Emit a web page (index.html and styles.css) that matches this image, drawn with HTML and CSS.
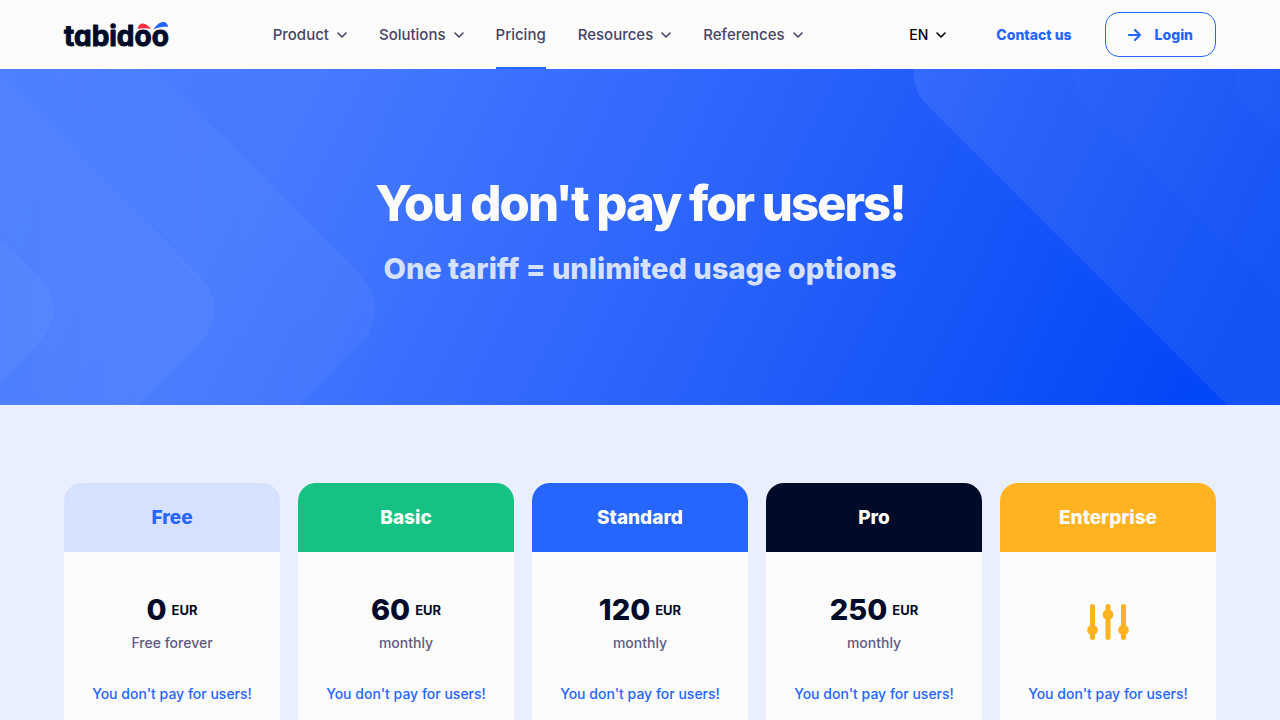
FILE: index.html
```html
<!DOCTYPE html>
<html lang="en">
  <head>
    <meta charset="utf-8">
    <meta name="viewport" content="width=device-width, initial-scale=1.0">
    <title>Pricing | Tabidoo</title>
    <link rel="stylesheet" href="styles.css">
  </head>
  <body>
    <header class="header">
      <a href="#" class="logo" aria-label="tabidoo">
        <svg width="106" height="28" viewBox="0 0 106 28">
          <text class="logo-text" x="0" y="25">tabidoo</text>
          <path fill="#ff3340" d="M73.500 8C74 4.500 76 2.500 78.500 2.500c3.500 0 6.500 3 8.500 5.500-5-1.300-9-1-13.500 0z"/>
          <path fill="#2666ff" d="M89.500 8.500C93 3 96 1 99.500 1c2.500 0 4.500 2 4.500 5-5-.8-9.500.3-14.500 2.500z"/>
        </svg>
      </a>
      <nav class="nav">
        <a href="#">Product <svg class="chevron" viewBox="0 0 10 6"><path d="M1 1l4 4 4-4"/></svg></a>
        <a href="#">Solutions <svg class="chevron" viewBox="0 0 10 6"><path d="M1 1l4 4 4-4"/></svg></a>
        <a href="#" class="active">Pricing</a>
        <a href="#">Resources <svg class="chevron" viewBox="0 0 10 6"><path d="M1 1l4 4 4-4"/></svg></a>
        <a href="#">References <svg class="chevron" viewBox="0 0 10 6"><path d="M1 1l4 4 4-4"/></svg></a>
      </nav>
      <div class="actions">
        <button type="button" class="lang">EN <svg class="chevron" viewBox="0 0 10 6"><path d="M1 1l4 4 4-4"/></svg></button>
        <a href="#" class="contact">Contact us</a>
        <a href="#" class="login">
          <svg class="arrow" viewBox="0 0 14 14"><path d="M1 7h11M7 2l5 5-5 5"/></svg>
          Login
        </a>
      </div>
    </header>

    <main>
      <section class="hero">
        <svg class="hero-shapes" viewBox="0 0 1280 336" preserveAspectRatio="none">
          <defs>
            <linearGradient id="fade-left" x1="1" y1="0" x2="0" y2="0">
              <stop offset="0" stop-color="#fff" stop-opacity=".04"/>
              <stop offset="1" stop-color="#fff" stop-opacity="0"/>
            </linearGradient>
            <linearGradient id="fade-right" gradientUnits="userSpaceOnUse" x1="913" y1="0" x2="1280" y2="200">
              <stop offset="0" stop-color="#fff" stop-opacity=".08"/>
              <stop offset="1" stop-color="#fff" stop-opacity=".07"/>
            </linearGradient>
          </defs>
          <path fill="url(#fade-left)" d="M154 0L361 207Q390 240 361 274L299 336H-140V0z"/>
          <path fill="url(#fade-left)" d="M-7 0L200 207Q229 240 200 274L138 336H-140V0z"/>
          <path fill="url(#fade-left)" d="M-140 28L39 207Q68 240 39 274L-23 336H-140z"/>
          <path fill="url(#fade-right)" d="M914 0Q912 20 925 34L1227 336H1280V0z"/>
          <path fill="#fff" fill-opacity=".015" d="M1074 0Q1072 20 1085 34L1280 229V0z"/>
          <path fill="#fff" fill-opacity=".015" d="M1235 0Q1233 20 1246 34L1280 68V0z"/>
        </svg>
        <div class="hero-content">
          <h1>You don't pay for users!</h1>
          <p>One tariff = unlimited usage options</p>
        </div>
      </section>

      <section class="plans">
        <article class="plan free">
          <h2>Free</h2>
          <div class="plan-body">
            <div class="price">
              <p class="amount"><strong>0</strong> <span>EUR</span></p>
              <p class="period">Free forever</p>
            </div>
            <p class="note">You don't pay for users!</p>
          </div>
        </article>
        <article class="plan basic">
          <h2>Basic</h2>
          <div class="plan-body">
            <div class="price">
              <p class="amount"><strong>60</strong> <span>EUR</span></p>
              <p class="period">monthly</p>
            </div>
            <p class="note">You don't pay for users!</p>
          </div>
        </article>
        <article class="plan standard">
          <h2>Standard</h2>
          <div class="plan-body">
            <div class="price">
              <p class="amount"><strong>120</strong> <span>EUR</span></p>
              <p class="period">monthly</p>
            </div>
            <p class="note">You don't pay for users!</p>
          </div>
        </article>
        <article class="plan pro">
          <h2>Pro</h2>
          <div class="plan-body">
            <div class="price">
              <p class="amount"><strong>250</strong> <span>EUR</span></p>
              <p class="period">monthly</p>
            </div>
            <p class="note">You don't pay for users!</p>
          </div>
        </article>
        <article class="plan enterprise">
          <h2>Enterprise</h2>
          <div class="plan-body">
            <div class="price">
              <svg class="sliders" viewBox="0 0 42 36">
                <path d="M5.500 2.500v31M21 2.500v31M36.500 2.500v31"/>
                <circle cx="5.500" cy="26" r="5.300"/>
                <circle cx="21" cy="10.500" r="5.300"/>
                <circle cx="36.500" cy="26" r="5.300"/>
              </svg>
            </div>
            <p class="note">You don't pay for users!</p>
          </div>
        </article>
      </section>
    </main>
  </body>
</html>
```

FILE: styles.css
```css
* {
  box-sizing: border-box;
}
body {
  margin: 0;
  font-family: Inter, sans-serif;
  font-size: 14px;
  font-weight: 500;
  background-color: #e9effe;
  color: #000b29;
}
h1, h2, p {
  margin: 0;
}
a {
  color: inherit;
  text-decoration: none;
}

/* header */
.header {
  display: flex;
  align-items: center;
  justify-content: space-between;
  height: 69px;
  padding: 0 5%;
  background-color: #fcfcfc;
}
.logo svg {
  display: block;
  overflow: visible;
}
.logo-text {
  font-size: 28px;
  font-weight: 700;
  font-feature-settings: "cv11";
  fill: #000b29;
  stroke: #000b29;
  stroke-width: 1;
  stroke-linejoin: round;
}
.nav {
  display: flex;
  align-self: stretch;
  gap: 32px;
  margin-right: 4px;
  color: #474566;
  font-size: 15px;
}
.nav a {
  display: flex;
  align-items: center;
  gap: 8px;
  border-top: 2px solid transparent;
  border-bottom: 2px solid transparent;
}
.nav .active {
  border-bottom-color: #2666ff;
}
.chevron {
  width: 10px;
  height: 6px;
  fill: none;
  stroke: currentColor;
  stroke-width: 1.6;
  stroke-linecap: round;
  stroke-linejoin: round;
}
.actions {
  display: flex;
  align-items: center;
}
.lang {
  display: flex;
  align-items: center;
  gap: 8px;
  margin-right: 50px;
  padding: 0;
  border: 0;
  background: none;
  color: #000;
  font: inherit;
}
.contact {
  margin-right: 33px;
  color: #2666ff;
  font-weight: 800;
}
.login {
  display: flex;
  align-items: center;
  gap: 13px;
  height: 45px;
  padding: 0 22px;
  border: 1px solid #2666ff;
  border-radius: 14px;
  color: #2666ff;
  font-weight: 800;
}
.arrow {
  width: 14px;
  height: 14px;
  fill: none;
  stroke: currentColor;
  stroke-width: 2.2;
  stroke-linecap: round;
  stroke-linejoin: round;
}

/* hero */
.hero {
  position: relative;
  padding: 105px 5% 116px;
  background: linear-gradient(116deg, #4c7fff 0%, #467aff 22%, #2e66fc 52%, #0346f6 94%);
  text-align: center;
}
.hero-shapes {
  position: absolute;
  inset: 0;
  width: 100%;
  height: 100%;
}
.hero-content {
  position: relative;
}
.hero h1 {
  color: #fcfcfc;
  font-size: 49px;
  font-weight: 800;
  line-height: 60px;
  letter-spacing: -2px;
}
.hero p {
  margin-top: 15px;
  color: #d6e0ff;
  font-size: 29px;
  font-weight: 800;
  line-height: 40px;
}

/* plans */
.plans {
  display: grid;
  grid-template-columns: repeat(5, 1fr);
  gap: 18px;
  padding: 78px 5%;
}
.plan {
  border-radius: 18px;
  overflow: hidden;
  background-color: #fcfcfc;
  text-align: center;
}
.plan h2 {
  padding: 21px 0 20px;
  color: #fcfcfc;
  font-size: 19px;
  font-weight: 800;
  line-height: 28px;
}
.free h2 {
  background-color: #d6e0ff;
  color: #2666ff;
}
.basic h2 {
  background-color: #15c283;
}
.standard h2 {
  background-color: #2666ff;
}
.pro h2 {
  background-color: #000b29;
}
.enterprise h2 {
  background-color: #ffb320;
}
.plan-body {
  padding: 38px 12px;
}
.price {
  height: 64px;
}
.amount {
  display: flex;
  align-items: center;
  justify-content: center;
  gap: 5px;
}
.amount strong {
  font-size: 29px;
  font-weight: 800;
  line-height: 40px;
}
.amount span {
  font-size: 13px;
  font-weight: 700;
}
.period {
  margin-top: 3px;
  color: #5c5a85;
  line-height: 20px;
}
.note {
  margin-top: 30px;
  color: #2666ff;
  line-height: 20px;
}
.sliders {
  width: 42px;
  height: 64px;
  fill: #ffb320;
}
.sliders path {
  stroke: #ffb320;
  stroke-width: 5;
  stroke-linecap: round;
}
```
